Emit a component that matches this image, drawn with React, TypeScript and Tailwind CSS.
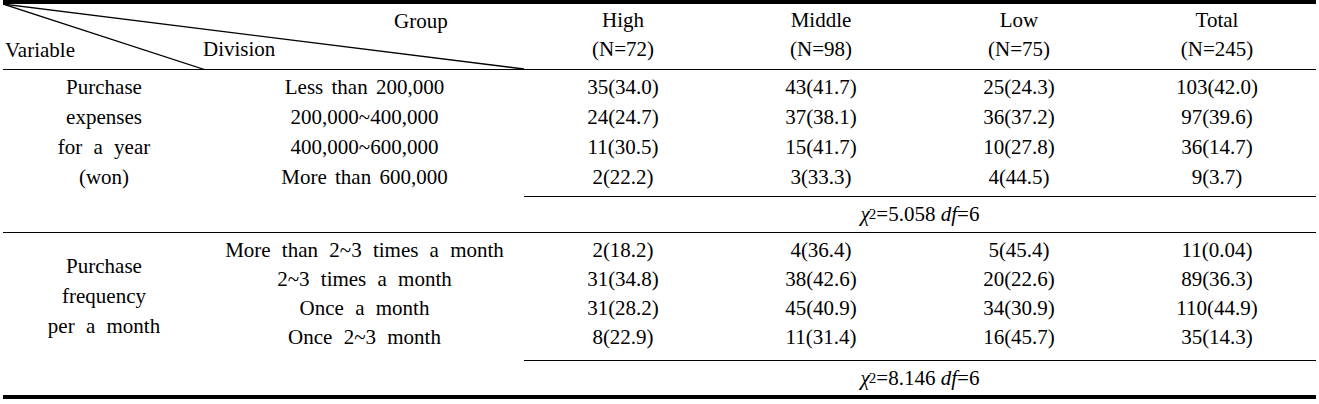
import React from 'react';

const expenses = [
  ['Purchase', 'Less than 200,000', '35(34.0)', '43(41.7)', '25(24.3)', '103(42.0)'],
  ['expenses', '200,000~400,000', '24(24.7)', '37(38.1)', '36(37.2)', '97(39.6)'],
  ['for a year', '400,000~600,000', '11(30.5)', '15(41.7)', '10(27.8)', '36(14.7)'],
  ['(won)', 'More than 600,000', '2(22.2)', '3(33.3)', '4(44.5)', '9(3.7)'],
];

const frequency = [
  ['More than 2~3 times a month', '2(18.2)', '4(36.4)', '5(45.4)', '11(0.04)'],
  ['2~3 times a month', '31(34.8)', '38(42.6)', '20(22.6)', '89(36.3)'],
  ['Once a month', '31(28.2)', '45(40.9)', '34(30.9)', '110(44.9)'],
  ['Once 2~3 month', '8(22.9)', '11(31.4)', '16(45.7)', '35(14.3)'],
];

const groups = [
  ['High', '(N=72)'],
  ['Middle', '(N=98)'],
  ['Low', '(N=75)'],
  ['Total', '(N=245)'],
];

function Chi({ value }: { value: string }) {
  return (
    <span className="whitespace-nowrap">
      <i>χ</i>
      <sup className="text-[15px] relative -top-[2px] -ml-[1px]">2</sup>={value} <i>df</i>=6
    </span>
  );
}

function DataCells({ cells }: { cells: string[] }) {
  return (
    <>
      {cells.map((c, i) => (
        <div key={i} className="flex items-center justify-center">{c}</div>
      ))}
    </>
  );
}

export default function App() {
  return (
    <div className="w-[1319px] h-[404px] bg-white text-black text-[21px] leading-none [font-family:Liberation_Serif,Times_New_Roman,serif]">
      <div className="ml-[3px] w-[1313px] border-t-[4px] border-black">
        {/* header */}
        <div className="relative grid h-[66px] grid-cols-[521px_repeat(4,198px)] border-b border-black">
          <svg className="absolute left-0 top-0" width="521" height="66" viewBox="0 0 521 66">
            <line x1="0" y1="0" x2="203" y2="66" stroke="black" strokeWidth="1.3" />
            <line x1="0" y1="0" x2="521" y2="65" stroke="black" strokeWidth="1.3" />
          </svg>
          <div className="relative">
            <div className="absolute left-[391px] top-[3px] h-[28px] flex items-center">Group</div>
            <div className="absolute left-[2px] top-[32px] h-[28px] flex items-center">Variable</div>
            <div className="absolute left-[200px] top-[31px] h-[28px] flex items-center">Division</div>
          </div>
          {groups.map(([g, n]) => (
            <div key={g} className="flex flex-col items-center pt-[2px]">
              <div className="h-[29px] flex items-center">{g}</div>
              <div className="h-[29px] flex items-center">{n}</div>
            </div>
          ))}
        </div>

        {/* purchase expenses */}
        <div className="grid grid-cols-[202px_319px_repeat(4,198px)] auto-rows-[30px] pt-[2px] pb-[4px] [word-spacing:3px]">
          {expenses.map(row => (
            <React.Fragment key={row[1]}>
              <div className="flex items-center justify-center [word-spacing:6px]">{row[0]}</div>
              <div className="flex items-center justify-center">{row[1]}</div>
              <DataCells cells={row.slice(2)} />
            </React.Fragment>
          ))}
        </div>
        <div className="ml-[521px] h-[36px] border-t border-black flex items-center justify-center">
          <Chi value="5.058" />
        </div>

        {/* purchase frequency */}
        <div className="grid grid-cols-[202px_319px_repeat(4,198px)] auto-rows-[29px] border-t border-black pt-[3px] pb-[8px] [word-spacing:6px]">
          <div className="row-span-4 flex flex-col items-center justify-center pt-[5px]">
            <div className="h-[30px] flex items-center">Purchase</div>
            <div className="h-[30px] flex items-center">frequency</div>
            <div className="h-[30px] flex items-center">per a month</div>
          </div>
          {frequency.map(row => (
            <React.Fragment key={row[0]}>
              <div className="flex items-center justify-center">{row[0]}</div>
              <DataCells cells={row.slice(1)} />
            </React.Fragment>
          ))}
        </div>
        <div className="ml-[521px] h-[35px] border-t border-black flex items-center justify-center">
          <Chi value="8.146" />
        </div>
        <div className="border-t-[4px] border-black" />
      </div>
    </div>
  );
}
